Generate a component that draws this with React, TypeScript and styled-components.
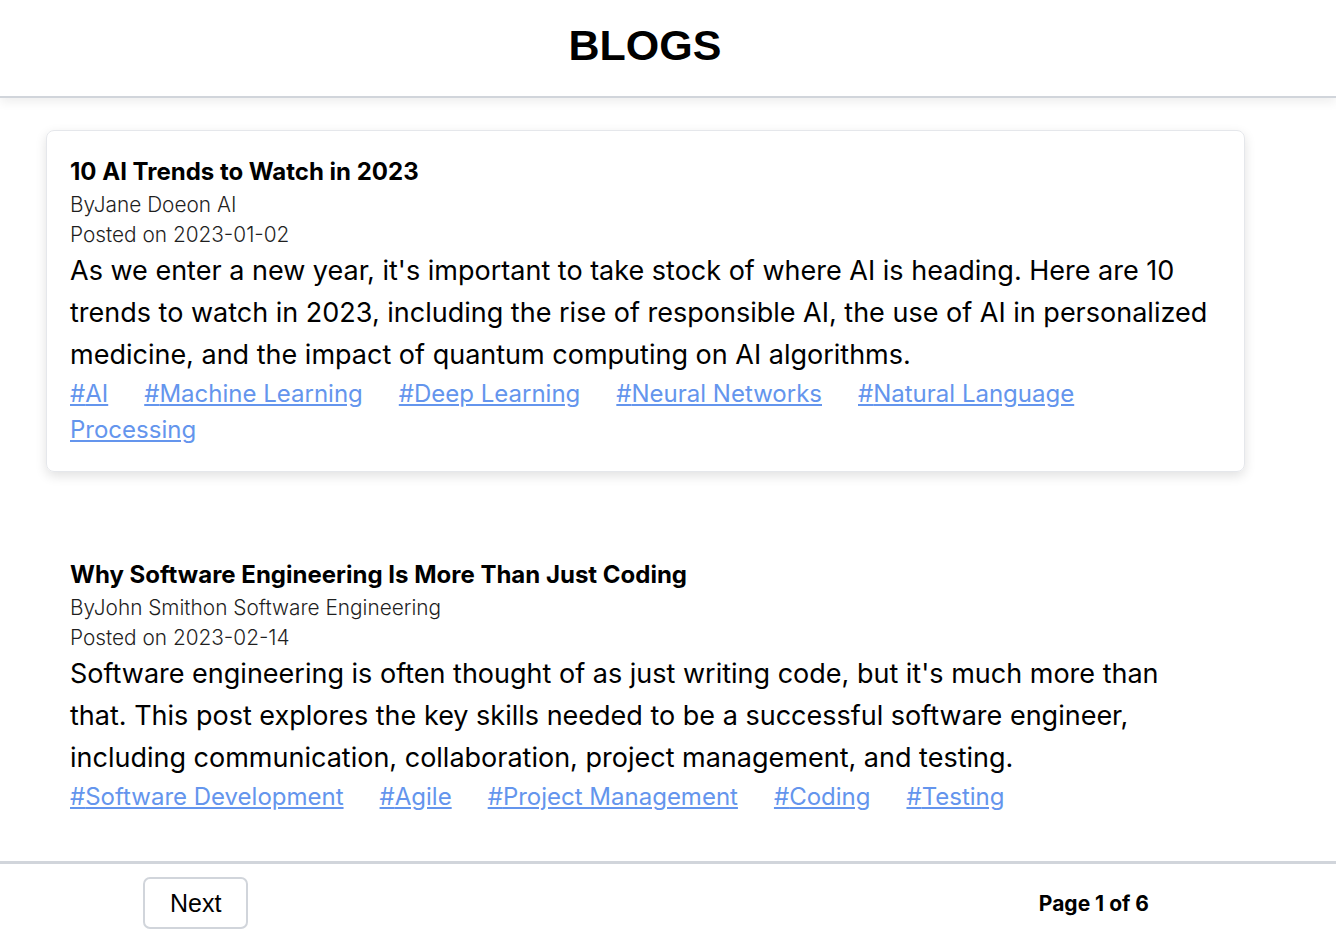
import React from "react";
import styled, { createGlobalStyle } from "styled-components";

const GlobalStyle = createGlobalStyle`
  html, body {
    margin: 0;
    padding: 0;
    background: #ffffff;
  }
  body {
    font-family: Inter, "Noto Sans", sans-serif;
    color: #000;
  }
`;

const Page = styled.div`
  display: flex;
  flex-direction: column;
  min-height: 100vh;
`;

const Header = styled.header`
  height: 98px;
  padding-right: 46px;
  padding-bottom: 6px;
  box-sizing: border-box;
  display: flex;
  align-items: center;
  justify-content: center;
  border-bottom: 2px solid #d1d5db;
  box-shadow: 0 4px 10px rgba(0, 0, 0, 0.07);
`;

const Title = styled.h1`
  margin: 0;
  font-family: "Liberation Sans", Arial, sans-serif;
  font-weight: 700;
  font-size: 43px;
  line-height: 1;
  color: #000;
`;

const Main = styled.main`
  flex: 1;
  padding: 32px 0 22px 46px;
  display: flex;
  flex-direction: column;
  gap: 61px;
`;

const Post = styled.article<{ $active?: boolean }>`
  width: 1199px;
  box-sizing: border-box;
  border-radius: 8px;
  border: 1px solid ${(p) => (p.$active ? "#e5e7eb" : "transparent")};
  padding: 23px 30px 23px 23px;
  box-shadow: ${(p) =>
    p.$active ? "0 4px 12px rgba(0, 0, 0, 0.12)" : "none"};
`;

const PostTitle = styled.h2`
  margin: 0;
  font-size: 24px;
  line-height: 36px;
  font-weight: 700;
  color: #000;
`;

const Meta = styled.p`
  margin: 0;
  font-size: 20.8px;
  line-height: 30px;
  font-weight: 300;
  color: #1f1f1f;
`;

const Body = styled.p`
  margin: 0;
  font-size: 27px;
  line-height: 42px;
  font-weight: 400;
  color: #000;
`;

const Tags = styled.div`
  font-size: 24px;
  line-height: 36px;
`;

const Tag = styled.a`
  color: #6495ed;
  text-decoration: underline;
  margin-right: 36px;
  cursor: pointer;
`;

const Footer = styled.footer`
  border-top: 3px solid #d1d5db;
  padding: 13px 187px 5px 143px;
  display: flex;
  align-items: center;
  justify-content: space-between;
`;

const NextButton = styled.button`
  height: 52px;
  padding: 0 25px;
  background: #fff;
  border: 2px solid #d1d5db;
  border-radius: 7px;
  font-family: "Liberation Sans", Arial, sans-serif;
  font-size: 25px;
  color: #000;
  cursor: pointer;
`;

const PageInfo = styled.span`
  font-size: 21px;
  font-weight: 700;
  color: #000;
`;

type BlogPost = {
  title: string;
  author: string;
  category: string;
  date: string;
  body: string;
  tags: string[];
};

const posts: BlogPost[] = [
  {
    title: "10 AI Trends to Watch in 2023",
    author: "Jane Doe",
    category: "AI",
    date: "2023-01-02",
    body:
      "As we enter a new year, it's important to take stock of where AI is heading. Here are 10 trends to watch in 2023, including the rise of responsible AI, the use of AI in personalized medicine, and the impact of quantum computing on AI algorithms.",
    tags: [
      "AI",
      "Machine Learning",
      "Deep Learning",
      "Neural Networks",
      "Natural Language Processing",
    ],
  },
  {
    title: "Why Software Engineering Is More Than Just Coding",
    author: "John Smith",
    category: "Software Engineering",
    date: "2023-02-14",
    body:
      "Software engineering is often thought of as just writing code, but it's much more than that. This post explores the key skills needed to be a successful software engineer, including communication, collaboration, project management, and testing.",
    tags: [
      "Software Development",
      "Agile",
      "Project Management",
      "Coding",
      "Testing",
    ],
  },
];

export default function App() {
  return (
    <>
      <GlobalStyle />
      <Page>
        <Header>
          <Title>BLOGS</Title>
        </Header>
        <Main>
          {posts.map((p, i) => (
            <Post key={p.title} $active={i === 0}>
              <PostTitle>{p.title}</PostTitle>
              <Meta>
                By{p.author}on {p.category}
              </Meta>
              <Meta>Posted on {p.date}</Meta>
              <Body>{p.body}</Body>
              <Tags>
                {p.tags.map((t) => (
                  <Tag key={t}>#{t}</Tag>
                ))}
              </Tags>
            </Post>
          ))}
        </Main>
        <Footer>
          <NextButton>Next</NextButton>
          <PageInfo>Page 1 of 6</PageInfo>
        </Footer>
      </Page>
    </>
  );
}
